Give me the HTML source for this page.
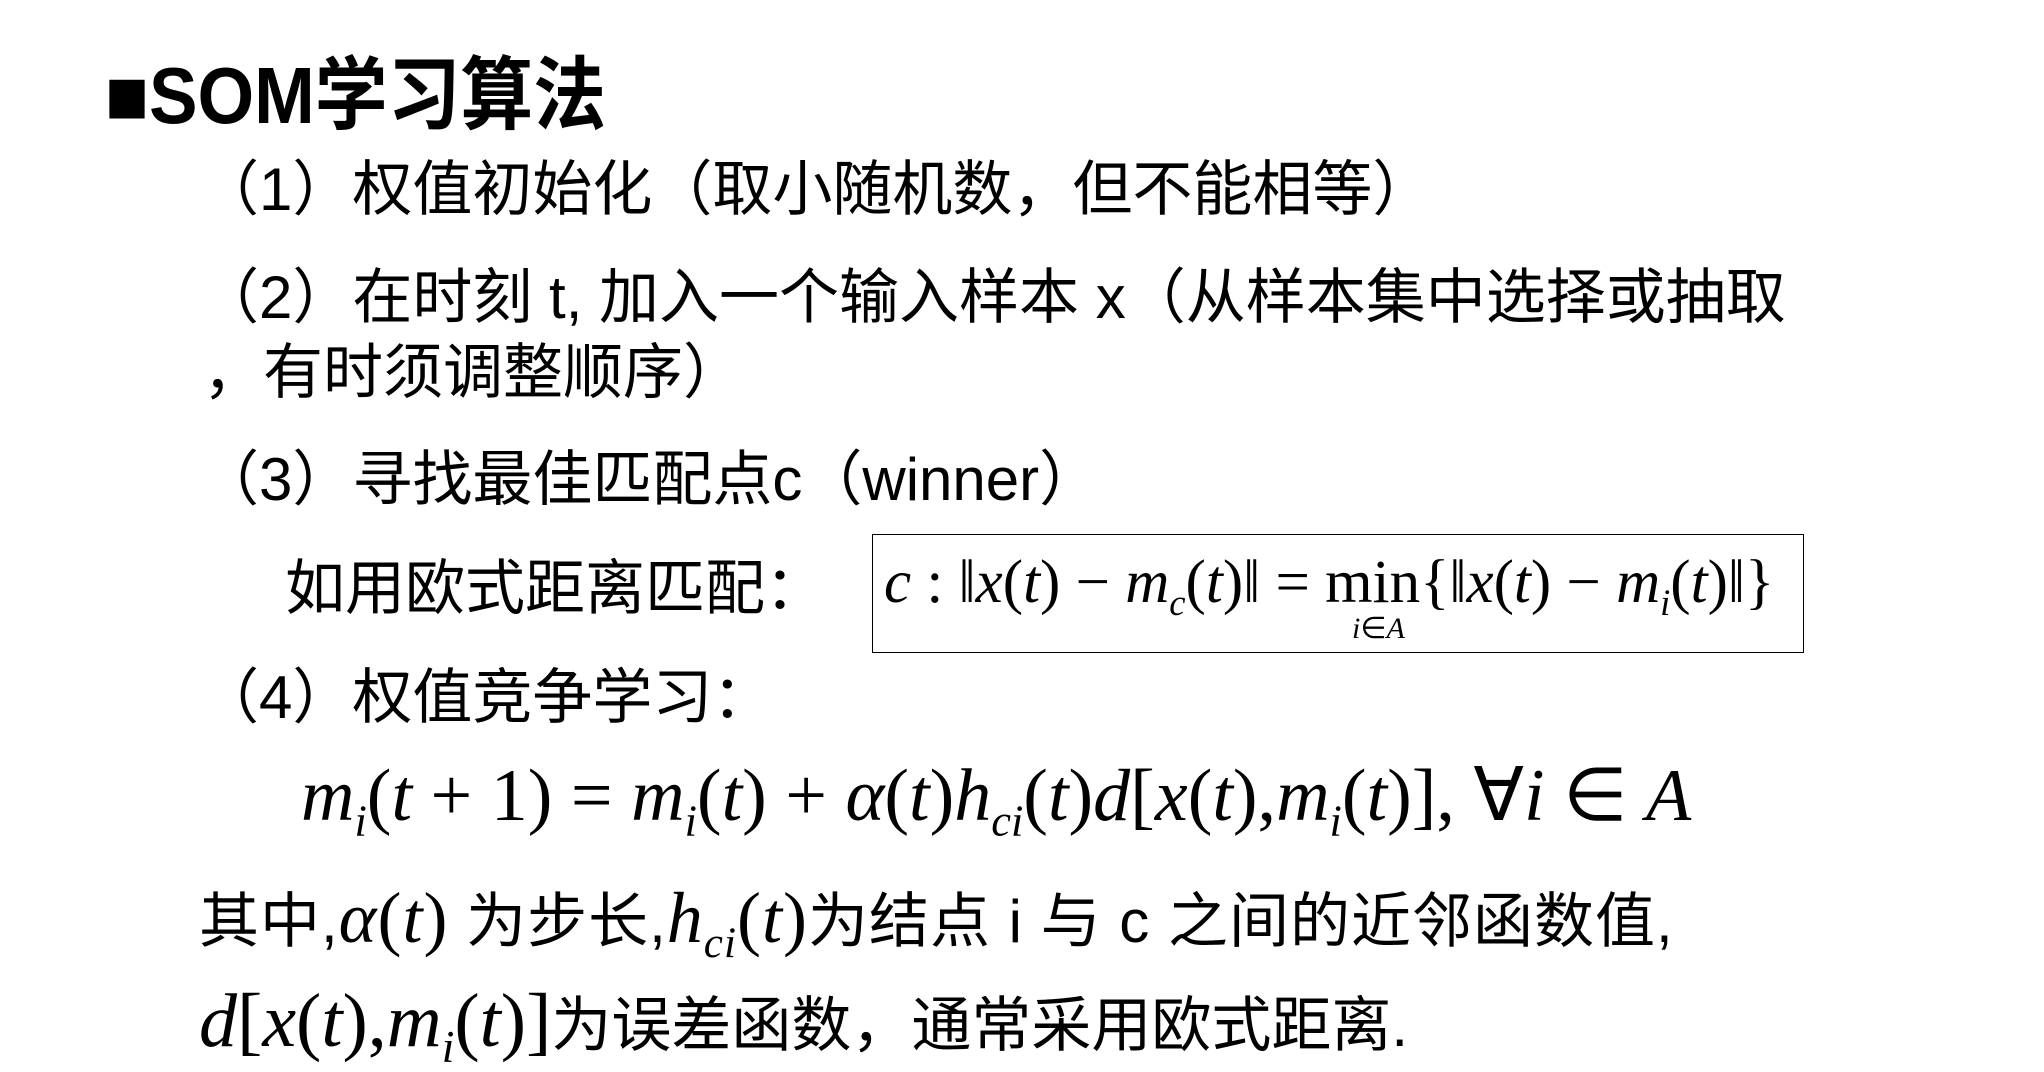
<!DOCTYPE html>
<html><head><meta charset="utf-8"><style>
body{margin:0;width:2044px;height:1062px;background:#fff;position:relative;overflow:hidden;color:#000}
.t{position:absolute;white-space:nowrap;font-family:"Liberation Sans","Noto Sans CJK SC",sans-serif;font-size:60px;line-height:1}
.m{font-family:"Liberation Serif",serif;font-style:italic}
.r{font-family:"Liberation Serif",serif;font-style:normal}
sub{font-size:0.6em;vertical-align:-0.35em}
</style></head><body>
<div class="t" style="left:105px;top:56px;font-size:80px;font-weight:bold;transform:scaleX(0.91);transform-origin:left">■SOM学习算法</div>
<div class="t" style="left:199px;top:160px">（1）权值初始化（取小随机数，但不能相等）</div>
<div class="t" style="left:199px;top:268px">（2）在时刻 t, 加入一个输入样本 x（从样本集中选择或抽取</div>
<div class="t" style="left:203px;top:343px">，有时须调整顺序）</div>
<div class="t" style="left:199px;top:450px">（3）寻找最佳匹配点c（winner）</div>
<div class="t" style="left:285px;top:559px">如用欧式距离匹配：</div>
<div style="position:absolute;left:872px;top:534px;width:932px;height:119px;border:1.5px solid #000;box-sizing:border-box"></div>
<div class="t m" style="left:884px;top:552px;font-size:61px">c<span class="r"> : ‖</span>x<span class="r">(</span>t<span class="r">) − </span>m<sub>c</sub><span class="r">(</span>t<span class="r">)‖ = min{‖</span>x<span class="r">(</span>t<span class="r">) − </span>m<sub>i</sub><span class="r">(</span>t<span class="r">)‖}</span></div>
<div class="t m" style="left:1352px;top:614px;font-size:30px">i<span class="r">∈</span>A</div>
<div class="t" style="left:199px;top:668px">（4）权值竞争学习：</div>
<div class="t m" style="left:301px;top:759px;font-size:74px">m<sub>i</sub><span class="r">(</span>t<span class="r"> + 1) = </span>m<sub>i</sub><span class="r">(</span>t<span class="r">) + </span>α<span class="r">(</span>t<span class="r">)</span>h<sub>ci</sub><span class="r">(</span>t<span class="r">)</span>d<span class="r">[</span>x<span class="r">(</span>t<span class="r">),</span>m<sub>i</sub><span class="r">(</span>t<span class="r">)], ∀</span>i<span class="r"> ∈ </span>A</div>
<div class="t" style="left:199px;top:882px;letter-spacing:1px">其中,<span class="m" style="font-size:72px">α<span class="r">(</span>t<span class="r">)</span></span> 为步长,<span class="m" style="font-size:72px">h<sub>ci</sub><span class="r">(</span>t<span class="r">)</span></span>为结点 i 与 c 之间的近邻函数值,</div>
<div class="t" style="left:199px;top:983px"><span class="m" style="font-size:76px">d<span class="r">[</span>x<span class="r">(</span>t<span class="r">),</span>m<sub>i</sub><span class="r">(</span>t<span class="r">)]</span></span>为误差函数，通常采用欧式距离.</div>
</body></html>
